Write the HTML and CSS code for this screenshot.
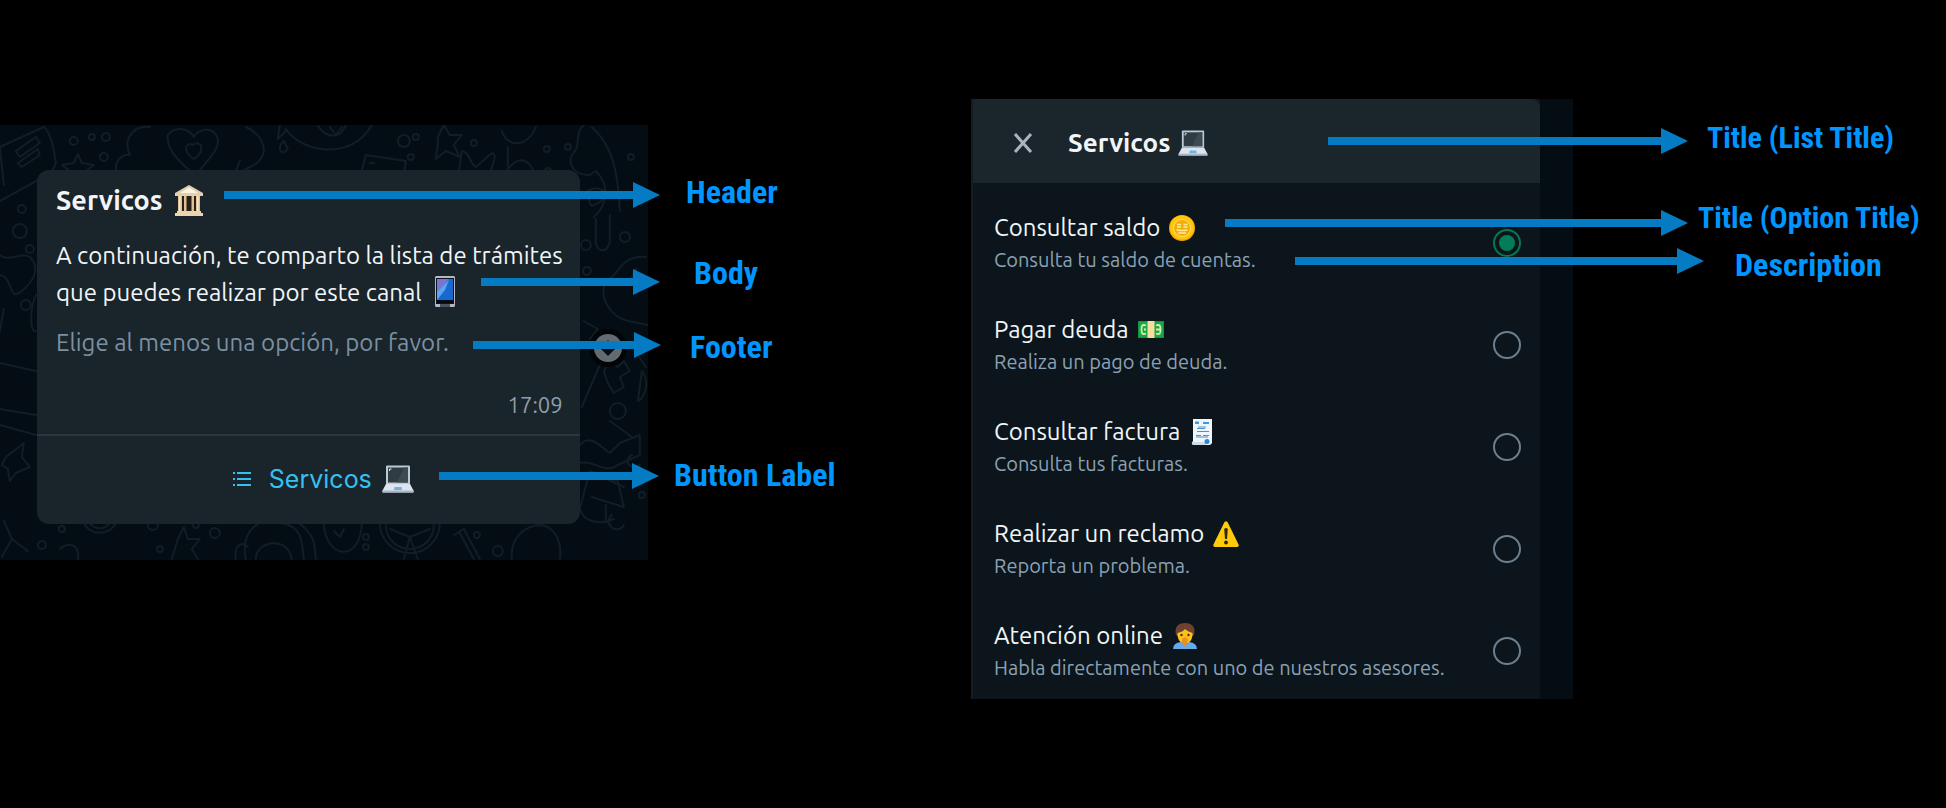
FILE: index.html
```html
<!DOCTYPE html>
<html lang="es">
<head>
<meta charset="utf-8">
<meta name="viewport" content="width=device-width, initial-scale=1">
<title>Servicos</title>
<link rel="stylesheet" href="styles.css">
</head>
<body>
<svg class="symbols" aria-hidden="true">
  <symbol id="laptop" viewBox="0 0 32 28">
    <path d="M4 1.5Q4 .5 5 .5H27Q28 .5 28 1.500V19H4Z" fill="#b9c9d6"/>
    <path d="M6 2.500H26V17.500H6Z" fill="#303b42"/>
    <path d="M15 17.500 22 2.500H26V17.500Z" fill="#3e4a52"/>
    <path d="M7.500 6V4H9.500" stroke="#dfe8ee" fill="none"/>
    <path d="M4 19H28L31.500 25.500V27.500H.500V25.500Z" fill="#dde4ef"/>
    <path d="M.5 25.500H31.500V27.500H.500Z" fill="#aab6c6"/>
    <path d="M12.500 22H19.500L20 25H12Z" fill="#6db4df"/>
  </symbol>
</svg>
<main class="board">
  <section class="figure">
    <div class="chat">
      <svg class="doodles" viewBox="0 0 648 435" preserveAspectRatio="xMidYMid slice" aria-hidden="true">
        <g fill="none" stroke="#111e26" stroke-width="2" stroke-linecap="round" stroke-linejoin="round">
          <path d="M0 22 44 2Q52 8 56 38 54 48 40 54L0 76M0 22 4 60M16 26 36 12 40 18 20 32ZM18 38 38 24 40 30 22 42Z"/>
          <path d="M126 55C108 46 118 28 130 30 122 12 136 0 150 2M126 55H148M168 10C176 0 190 4 194 12 198 4 214 0 218 14 220 26 204 38 195 52 184 38 166 28 168 10Z"/>
          <path d="M194 34C182 26 186 16 193 20 202 14 206 26 194 34M246 2C260 8 268 22 262 32 256 44 240 42 232 56L240 36M66 54 70 46 62 40 74 38 78 29 82 38 94 40 86 46 90 55"/>
          <path d="M286 4C302 28 352 36 372 0M318 0C324 12 340 16 346 0M330 2 336 10 342 2M280 0 278 14 286 6M284 16C276 24 282 32 288 24ZM360 54 366 30 406 36 404 50M370 38H374M390 46H400"/>
          <path d="M438 12 444 0 450 10 462 10 454 20 460 32 446 26 436 34 438 20ZM458 54 462 26C470 26 470 40 476 42L492 28C500 30 488 46 490 54M502 6C508 24 528 22 536 2M508 22V42M510 42C520 30 532 34 536 54M500 54 510 42"/>
          <path d="M584 0C574 8 582 22 572 30 568 40 574 50 590 50L596 46C610 60 608 80 594 92M592 2C612 20 618 44 620 86M588 66C600 58 614 70 598 78 588 86 590 74 588 66M596 94V118C598 128 608 128 610 116V90"/>
          <path d="M0 130C10 138 20 126 30 132 42 144 32 158 22 166 8 178 14 152 0 150M0 238 36 246M0 206 4 184M36 170C28 190 32 210 36 206M0 300 36 310M0 284 36 290M6 332 14 326 24 318 22 332 30 342 16 348 10 356 8 344 2 340Z"/>
          <path d="M646 132C620 130 620 150 606 156 598 174 612 192 628 196L648 200M630 156 636 144 640 158M584 196 598 204 590 214M582 282 600 240C606 220 622 214 634 224L646 242M604 246 610 236 618 242 624 236 630 246 620 252 624 262 614 268 608 258Z"/>
          <path d="M642 246C650 256 646 272 638 276ZM580 320C592 308 600 322 610 328L620 318 640 310V330L618 340C604 350 594 334 580 338M610 296 632 312M592 372 624 382 618 356 590 346 580 384C584 398 602 400 614 394M594 348 624 362M612 390A8 8 0 1 0 624 400"/>
          <path d="M2 432 12 414 4 396M12 414 28 426M60 424C70 416 80 420 78 434M84 398A18 18 0 0 0 116 398M90 398A12 12 0 0 0 110 398M172 434 178 414 184 402 188 414 200 414 192 424 198 434M246 434C240 404 262 390 282 398 304 402 302 420 304 434M256 434C256 416 288 410 292 434M300 399C318 412 314 424 316 434"/>
          <path d="M324 399C326 434 360 438 362 399M344 404 340 412 334 406M380 398A30 30 0 1 0 440 398M386 400A24 24 0 1 0 434 400M410 412 390 404M410 412 430 404M410 412 404 434M410 412 418 434M454 410 464 404 480 434M460 408 474 434M512 434C510 414 524 400 542 400 558 404 562 420 560 434"/>
          <path d="M640 340C628 346 624 334 632 330M606 380V396M236 434C234 420 242 416 248 422"/>
          <circle cx="74" cy="16" r="4"/><circle cx="92" cy="12" r="3"/><circle cx="106" cy="12" r="4"/><circle cx="104" cy="32" r="4"/><circle cx="404" cy="16" r="6"/><circle cx="416" cy="12" r="3"/><circle cx="411" cy="32" r="3"/><circle cx="474" cy="18" r="3"/><circle cx="547" cy="24" r="3"/><circle cx="568" cy="22" r="3"/><circle cx="548" cy="46" r="3"/><circle cx="631" cy="32" r="3"/><circle cx="340" cy="50" r="3"/><circle cx="22" cy="84" r="4"/><circle cx="20" cy="106" r="7"/><circle cx="30" cy="124" r="4"/><circle cx="26" cy="180" r="5"/><circle cx="586" cy="120" r="5"/><circle cx="625" cy="112" r="5"/><circle cx="587" cy="146" r="4"/><circle cx="618" cy="286" r="8"/><circle cx="62" cy="404" r="3"/><circle cx="42" cy="420" r="4"/><circle cx="153" cy="400" r="5"/><circle cx="160" cy="424" r="3"/><circle cx="196" cy="400" r="3"/><circle cx="215" cy="408" r="5"/><circle cx="366" cy="412" r="3"/><circle cx="366" cy="422" r="3"/><circle cx="477" cy="410" r="3"/><circle cx="498" cy="426" r="5"/><circle cx="642" cy="370" r="3"/>
        </g>
      </svg>
      <article class="message">
        <div class="content">
          <h1 class="heading">Servicos
            <svg class="bank" viewBox="0 0 28 31" role="img" aria-label="banco">
              <path d="M3 10H25V27H3Z" fill="#2a2016"/><path d="M14 0 28 8V11H0V8Z" fill="#e3cfae"/><path d="M14 2.500 23 8H5Z" fill="#fbf3e2"/><path d="M3 11H7V27H3ZM9 11H11.500V27H9ZM16.500 11H19V27H16.500ZM21 11H25V27H21Z" fill="#dcc299"/><path d="M4 11H5.500V27H4ZM22 11H23.500V27H22Z" fill="#f6e7c8"/><path d="M2 26H26V28H2ZM0 28H28V31H0Z" fill="#e9d5b0"/>
            </svg>
          </h1>
          <p class="text">A continuación, te comparto la lista de trámites que puedes realizar por este canal
            <svg class="phone" viewBox="0 0 20 31" role="img" aria-label="celular">
              <path d="M1 0H19L20 1V30L19 31H1L0 30V1Z" fill="#b9b4bd"/><path d="M1 2H19V28H1Z" fill="#071424"/><path d="M2 3H18V24H2Z" fill="#1769cf"/><path d="M2 3H14L2 18Z" fill="#7a74d0"/><path d="M2 16 14 4 10 14 2 24Z" fill="#58a4f2"/><path d="M5 28H15V31H5Z" fill="#465361"/><path d="M2 24H18V27H2Z" fill="#030910"/>
            </svg>
          </p>
          <p class="hint">Elige al menos una opción, por favor.</p>
          <time class="time">17:09</time>
        </div>
        <button class="open-list" type="button">
          <svg class="list-icon" viewBox="0 0 18 14" aria-hidden="true"><path d="M0 1H2M4 1H18M0 7H2M4 7H18M0 13H2M4 13H18" stroke="currentColor" stroke-width="2"/></svg>
          <span>Servicos</span>
          <svg class="laptop"><use href="#laptop"/></svg>
        </button>
      </article>
      <button class="scroll-down" type="button" aria-label="Bajar"><svg viewBox="0 0 28 28" aria-hidden="true"><circle cx="14" cy="14" r="14" fill="#626b72"/><path d="M14 6 22 14 14 22 6 14Z" fill="#070c11"/></svg></button>
    </div>
    <i class="arrow a-header"></i><span class="label l-header">Header</span>
    <i class="arrow a-body"></i><span class="label l-body">Body</span>
    <i class="arrow a-footer"></i><span class="label l-footer">Footer</span>
    <i class="arrow a-button"></i><span class="label l-button">Button Label</span>
  </section>

  <section class="figure">
    <div class="sheet">
      <form class="dialog">
        <header class="bar">
          <button class="close" type="button" aria-label="Cerrar"><svg viewBox="0 0 20 20" aria-hidden="true"><path d="M2 1 18 19M18 1 2 19" stroke="currentColor" stroke-width="3"/></svg></button>
          <h2 class="bar-title">Servicos <svg class="laptop"><use href="#laptop"/></svg></h2>
        </header>
        <div class="options">
          <label class="option"><span class="option-text"><span class="name">Consultar saldo
            <svg class="emoji" viewBox="0 0 26 26" aria-hidden="true"><circle cx="13" cy="13" r="13" fill="#f3a400"/><circle cx="13" cy="12.500" r="12" fill="#ffc60c"/><circle cx="13" cy="13" r="8.500" fill="#f5ad08" stroke="#ffe36a"/><path d="M8 9.500H12M8 12H12M14.500 9.500H18.500M14.500 12H18.500M7.500 15Q13 16 18.500 15M9 18H17" fill="none" stroke="#ffec94" stroke-width="1.300"/></svg></span>
            <span class="detail">Consulta tu saldo de cuentas.</span></span><input type="radio" name="service" checked></label>
          <label class="option"><span class="option-text"><span class="name">Pagar deuda
            <svg class="emoji" viewBox="0 0 26 26" aria-hidden="true"><path d="M0 4H26V21H0Z" fill="#12923a"/><path d="M1 5H25V20H1Z" fill="#17a847"/><path d="M9.500 4H16.500V21H9.500Z" fill="#f8dda0"/><path d="M8 8.500C4 7 3.500 9 3.500 12.500S4 18 8 16.500M6 12.500H8M18 8.500C22 7 22.500 9 22.500 12.500S22 18 18 16.500M18 12.500H22" fill="none" stroke="#d9edaa" stroke-width="1.800"/></svg></span>
            <span class="detail">Realiza un pago de deuda.</span></span><input type="radio" name="service"></label>
          <label class="option"><span class="option-text"><span class="name">Consultar factura
            <svg class="emoji" viewBox="0 0 26 26" aria-hidden="true"><path d="M4 0H23V24Q22 26 20 26H4Q2 24 4 22Z" fill="#eef5fb"/><path d="M3 23H17V26H4Q2 25 3 23Z" fill="#cfdbe7"/><path d="M6 2.500H10V5H6ZM14 3H20V5H14Z" fill="#3c9be0"/><path d="M9 8H17M8 9.500H16M8 12.500H20M7 16.500H12M14 16.500H20M7 18H19" stroke="#4a93cf" stroke-width="1.200"/><circle cx="18" cy="22.500" r="2.500" fill="#2487da"/></svg></span>
            <span class="detail">Consulta tus facturas.</span></span><input type="radio" name="service"></label>
          <label class="option"><span class="option-text"><span class="name">Realizar un reclamo
            <svg class="emoji" viewBox="0 0 26 26" aria-hidden="true"><path d="M11.500 1Q13 -.5 14.500 1L25.800 24Q26 26 24 26H2Q0 26 .2 24Z" fill="#ffcb0a"/><path d="M11.200 8Q13 6 14.800 8L14 18H12Z" fill="#33260c"/><circle cx="13" cy="21.500" r="1.900" fill="#33260c"/></svg></span>
            <span class="detail">Reporta un problema.</span></span><input type="radio" name="service"></label>
          <label class="option"><span class="option-text"><span class="name">Atención online
            <svg class="emoji" viewBox="0 0 26 26" aria-hidden="true"><path d="M4 12C2 4 6 0 13 0S24 4 22 12L19 14H7Z" fill="#70412c"/><path d="M5.500 10C9 9 12 8 13 6 15 8 18 9 20.500 10 21 15 18 21 13 21S5 15 5.500 10Z" fill="#fcc21b"/><path d="M1 26Q1 20 9 19L13 22 17 19Q25 20 25 26Z" fill="#6aa9e8"/><path d="M10 16 13 14 16 16 15 20 13 24 10 20Z" fill="#f08f12"/><circle cx="9.500" cy="12" r="1.200" fill="#4a2c16"/><circle cx="16.500" cy="12" r="1.200" fill="#4a2c16"/></svg></span>
            <span class="detail">Habla directamente con uno de nuestros asesores.</span></span><input type="radio" name="service"></label>
        </div>
      </form>
    </div>
    <i class="arrow a-list"></i><span class="label title l-list">Title (List Title)</span>
    <i class="arrow a-option"></i><span class="label title l-option">Title (Option Title)</span>
    <i class="arrow a-description"></i><span class="label l-description">Description</span>
  </section>
</main>
</body>
</html>
```

FILE: styles.css
```css
* { box-sizing: border-box; }

body {
  margin: 0;
  min-height: 100vh;
  background: #000;
  color: #f2f5f7;
  font-family: Ubuntu, "Noto Sans", "Open Sans", sans-serif;
}

button {
  border: 0;
  padding: 0;
  background: none;
  color: inherit;
  font: inherit;
  cursor: pointer;
}

h1, h2, p { margin: 0; }
svg { flex: none; }
.symbols { position: absolute; width: 0; height: 0; }

.board {
  display: grid;
  grid-template-columns: 971fr 975fr;
  align-items: start;
}

.figure { position: relative; min-width: 0; }

/* chat message */
.chat {
  position: relative;
  width: 66.7%;
  min-width: 640px;
  margin-top: 125px;
  padding: 45px 68px 36px 37px;
  background: #040d14;
}

.doodles {
  position: absolute;
  inset: 0;
  width: 100%;
  height: 100%;
}

.message {
  position: relative;
  border-radius: 12px;
  background: #19242b;
}

.content {
  display: flex;
  flex-direction: column;
  min-height: 266px;
  padding: 12px 17px 9px 19px;
  border-bottom: 2px solid #2c373d;
}

.heading {
  display: flex;
  align-items: center;
  gap: 13px;
  font-size: 27px;
  line-height: 36px;
}

.bank { width: 28px; height: 31px; }

.text {
  margin-top: 19px;
  font-size: 24px;
  line-height: 37px;
}

.phone {
  width: 20px;
  height: 31px;
  margin-left: 8px;
  vertical-align: -6px;
}

.hint {
  margin-top: 13px;
  color: #7b90a3;
  font-size: 24px;
  line-height: 37px;
}

.time {
  margin-top: auto;
  color: #8f9eac;
  font-size: 22px;
  line-height: 40px;
  text-align: right;
}

.open-list {
  display: flex;
  align-items: center;
  justify-content: center;
  width: 100%;
  height: 88px;
  padding: 0 0 3px 30px;
  color: #35c0f0;
  font-family: Inter, sans-serif;
  font-size: 25px;
}

.list-icon { width: 18px; height: 14px; margin-right: 18px; }
.laptop { width: 32px; height: 28px; }
.open-list .laptop { margin-left: 10px; }

.scroll-down {
  position: absolute;
  top: 204px;
  right: 21px;
  display: flex;
  padding: 5px;
  border-radius: 50%;
  background: #020406;
}

.scroll-down svg { width: 28px; height: 28px; }

/* option list */
.sheet {
  width: 61.7%;
  min-width: 590px;
  margin-top: 99px;
  padding-right: 33px;
  background: #050d14;
}

.dialog {
  border-left: 2px solid #131d23;
  background: #0b151b;
}

.bar {
  display: flex;
  align-items: center;
  gap: 35px;
  height: 84px;
  padding: 4px 40px 0;
  border-radius: 0 8px 0 0;
  background: #1a252c;
}

.close { display: flex; color: #a9b4bc; }
.close svg { width: 20px; height: 20px; }

.bar-title {
  display: flex;
  align-items: center;
  gap: 7px;
  font-size: 26px;
  line-height: 36px;
}

.bar-title .laptop { width: 30px; height: 26px; }

.options {
  display: grid;
  gap: 6px;
  padding-top: 12px;
}

.option {
  display: flex;
  align-items: center;
  justify-content: space-between;
  height: 96px;
  padding: 0 19px 0 21px;
}

.option-text { display: flex; flex-direction: column; }

.name {
  display: flex;
  align-items: center;
  gap: 9px;
  font-size: 24px;
  line-height: 34px;
}

.emoji { width: 26px; height: 26px; }

.detail {
  color: #8ba1b4;
  font-size: 20px;
  line-height: 30px;
}

.option input {
  appearance: none;
  display: grid;
  place-items: center;
  width: 28px;
  height: 28px;
  margin: 0;
  border: 2px solid #6b7f8f;
  border-radius: 50%;
}

.option input:checked { border-color: #03794f; }

.option input:checked::after {
  content: "";
  width: 16px;
  height: 16px;
  border-radius: 50%;
  background: #037c57;
}

/* callouts over both figures */
.arrow {
  position: absolute;
  height: 26px;
  background: linear-gradient(#057bc4, #057bc4) 0 50% / calc(100% - 26px) 8px no-repeat;
}

.arrow::after {
  content: "";
  position: absolute;
  right: 0;
  border: solid transparent;
  border-width: 13px 0 13px 27px;
  border-left-color: #057bc4;
}

.label {
  position: absolute;
  color: #0095ff;
  font: bold 32px/40px "Roboto Condensed", Roboto, sans-serif;
  white-space: nowrap;
}

.title { font-size: 30px; }

.a-header { top: 182px; left: 224px; width: 436px; }
.a-body { top: 269px; left: 481px; width: 179px; }
.a-footer { top: 332px; left: 473px; width: 188px; }
.a-button { top: 463px; left: 439px; width: 220px; }
.l-header { top: 172px; left: 686px; }
.l-body { top: 253px; left: 694px; }
.l-footer { top: 327px; left: 690px; }
.l-button { top: 455px; left: 674px; }

.a-list { top: 128px; left: 357px; width: 360px; }
.a-option { top: 210px; left: 254px; width: 463px; }
.a-description { top: 248px; left: 324px; width: 409px; }
.l-list { top: 118px; left: 736px; }
.l-option { top: 198px; left: 727px; }
.l-description { top: 245px; left: 764px; }
```
